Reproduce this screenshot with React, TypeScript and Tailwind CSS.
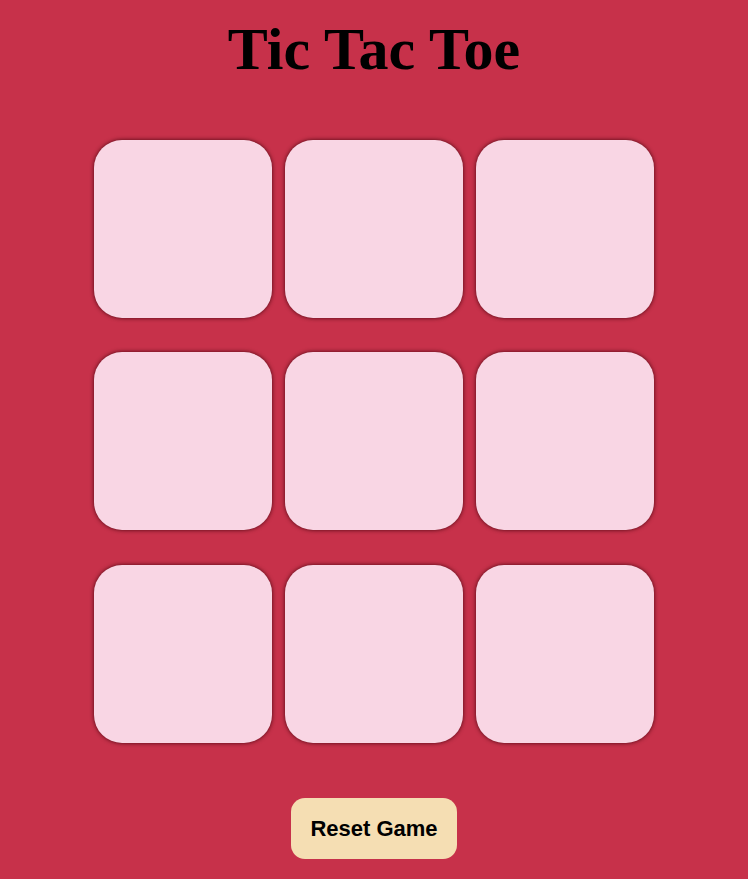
export default function App() {
  const cells = Array.from({ length: 9 });
  return (
    <div className="min-h-[879px] w-full bg-[#c7314a] flex flex-col items-center">
      <h1 className="mt-[15px] text-[60px] leading-[69px] font-bold text-black font-['Liberation_Serif',serif]">
        Tic Tac Toe
      </h1>
      <div className="mt-[56px] grid grid-cols-[178px_178px_178px] gap-x-[13px] gap-y-[34.4px]">
        {cells.map((_, i) => (
          <div
            key={i}
            className="h-[178px] w-[178px] rounded-[28px] bg-[#f9d6e4] shadow-[0_0_4px_rgba(60,0,10,0.9)]"
          />
        ))}
      </div>
      <button className="mt-[55px] h-[61px] w-[166px] rounded-[14px] bg-[#f5deb3] text-[22px] font-bold text-black font-['Liberation_Sans',Arial,sans-serif]">
        Reset Game
      </button>
    </div>
  );
}
